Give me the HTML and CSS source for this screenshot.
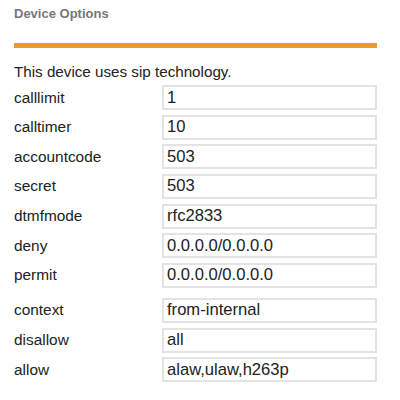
FILE: index.html
```html
<!DOCTYPE html>
<html>
<head>
<meta charset="utf-8">
<link rel="stylesheet" href="styles.css">
</head>
<body>
<div class="panel">
  <h2 class="title">Device Options</h2>
  <div class="rule"></div>
  <p class="intro">This device uses sip technology.</p>
  <div class="fields">
    <label class="lbl">calllimit</label><input class="inp" value="1" readonly>
    <label class="lbl">calltimer</label><input class="inp" value="10" readonly>
    <label class="lbl">accountcode</label><input class="inp" value="503" readonly>
    <label class="lbl">secret</label><input class="inp" value="503" readonly>
    <label class="lbl">dtmfmode</label><input class="inp" value="rfc2833" readonly>
    <label class="lbl">deny</label><input class="inp" value="0.0.0.0/0.0.0.0" readonly>
    <label class="lbl">permit</label><input class="inp" value="0.0.0.0/0.0.0.0" readonly>
  </div>
  <div class="fields second">
    <label class="lbl">context</label><input class="inp" value="from-internal" readonly>
    <label class="lbl">disallow</label><input class="inp" value="all" readonly>
    <label class="lbl">allow</label><input class="inp" value="alaw,ulaw,h263p" readonly>
  </div>
</div>
</body>
</html>
```
FILE: styles.css
```css
html, body {
  margin: 0;
  padding: 0;
  background: #ffffff;
}
.panel {
  width: 363px;
  padding-left: 14px;
  font-family: "Liberation Sans", Arial, sans-serif;
  color: #222;
}
.title {
  margin: 6px 0 0 0;
  font-size: 13px;
  line-height: 16px;
  font-weight: bold;
  color: #777;
}
.rule {
  margin-top: 21px;
  height: 5px;
  background: #f7962f;
}
.intro {
  margin: 15px 0 0 0;
  font-size: 15.2px;
  line-height: 18px;
}
.fields {
  display: grid;
  grid-template-columns: 148px 215px;
  grid-auto-rows: 25px;
  row-gap: 4.67px;
  margin-top: 4px;
  align-items: center;
}
.fields.second {
  margin-top: 10px;
}
.lbl {
  font-size: 15.4px;
  line-height: 18px;
  color: #222;
}
.inp {
  box-sizing: border-box;
  width: 215px;
  height: 25px;
  margin: 0;
  padding: 0 3px;
  border: 2px solid #e3e3e3;
  font-family: "Liberation Sans", Arial, sans-serif;
  font-size: 16.6px;
  color: #222;
  background: #fff;
  outline: none;
}
```
